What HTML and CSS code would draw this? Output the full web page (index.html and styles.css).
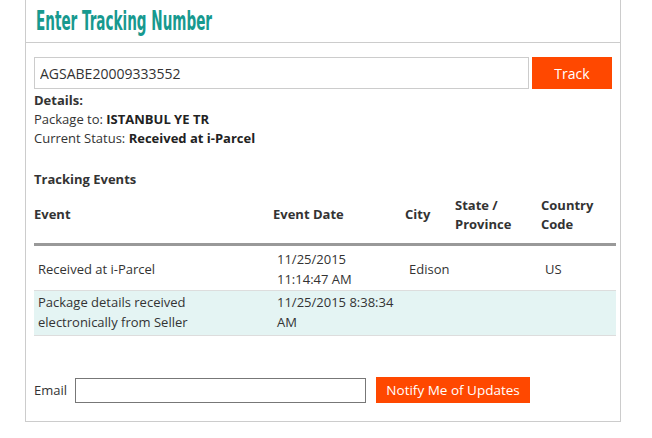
FILE: index.html
```html
<!DOCTYPE html>
<html lang="en">
<head>
    <meta charset="UTF-8">
    <meta name="viewport" content="width=device-width, initial-scale=1.0">
    <title>Enter Tracking Number</title>
    <link rel="stylesheet" href="styles.css">
</head>
<body>

    <div class="tracking-box">
        <div class="tracking-header">
            <h1><span>Enter Tracking Number</span></h1>
        </div>

        <div class="tracking-body">
            <form class="track-form">
                <input type="text" class="track-input" value="AGSABE20009333552">
                <button type="button" class="btn-orange btn-track">Track</button>
            </form>

            <div class="details">
                <div class="details-title">Details:</div>
                <div>Package to: <b>ISTANBUL YE TR</b></div>
                <div>Current Status: <b>Received at i-Parcel</b></div>
            </div>

            <h3 class="events-title">Tracking Events</h3>

            <table class="events-table">
                <colgroup>
                    <col style="width: 239px">
                    <col style="width: 132px">
                    <col style="width: 50px">
                    <col style="width: 86px">
                    <col>
                </colgroup>
                <thead>
                    <tr>
                        <th>Event</th>
                        <th>Event Date</th>
                        <th>City</th>
                        <th>State / Province</th>
                        <th>Country Code</th>
                    </tr>
                </thead>
                <tbody>
                    <tr>
                        <td>Received at i-Parcel</td>
                        <td>11/25/2015 11:14:47 AM</td>
                        <td>Edison</td>
                        <td></td>
                        <td>US</td>
                    </tr>
                    <tr class="alt">
                        <td>Package details received electronically from Seller</td>
                        <td>11/25/2015 8:38:34 AM</td>
                        <td></td>
                        <td></td>
                        <td></td>
                    </tr>
                </tbody>
            </table>

            <form class="notify-form">
                <label for="email">Email</label>
                <input type="text" id="email" class="email-input">
                <button type="button" class="btn-orange btn-notify">Notify Me of Updates</button>
            </form>
        </div>
    </div>

</body>
</html>
```

FILE: styles.css
```css
body {
    font-family: 'Open Sans', sans-serif;
    font-size: 13px;
    color: #333;
    background-color: #fff;
    margin: 0;
    padding: 0;
}

.tracking-box {
    width: 594px;
    margin-left: 25px;
    border: 1px solid #ccc;
    border-top: none;
}

.tracking-header {
    height: 42px;
    border-bottom: 1px solid #ccc;
    padding-left: 10px;
}

.tracking-header h1 {
    margin: 0;
    padding-top: 2px;
    font-family: 'DejaVu Sans Condensed', 'DejaVu Sans', sans-serif;
    font-stretch: condensed;
    font-size: 26px;
    font-weight: bold;
    line-height: 38px;
    color: #17998f;
}

.tracking-header h1 span {
    display: inline-block;
    transform: scaleX(0.58);
    transform-origin: left center;
    white-space: nowrap;
}

.tracking-body {
    padding: 14px 4px 18px 8px;
}

.track-form {
    display: flex;
    gap: 3px;
    margin: 0;
}

.track-input {
    width: 495px;
    height: 32px;
    box-sizing: border-box;
    border: 1px solid #ccc;
    padding: 0 5px;
    font-family: 'Open Sans', sans-serif;
    font-size: 14px;
    color: #333;
}

.btn-orange {
    background-color: #ff4800;
    color: #fff;
    border: none;
    border-radius: 0;
    font-family: 'Open Sans', sans-serif;
    cursor: pointer;
}

.btn-track {
    width: 80px;
    height: 32px;
    font-size: 14px;
}

.details {
    line-height: 19px;
    margin-top: 2px;
}

.details-title {
    font-weight: bold;
}

.details b {
    color: #222;
}

.events-title {
    font-size: 13px;
    font-weight: bold;
    margin: 22px 0 0;
    line-height: 19px;
}

.events-table {
    width: 582px;
    table-layout: fixed;
    border-collapse: collapse;
    margin-top: 6px;
}

.events-table th {
    text-align: left;
    font-weight: bold;
    line-height: 19px;
    padding: 0 4px 9px 0;
    height: 39px;
    border-bottom: 3px solid #999;
    vertical-align: middle;
}

.events-table td {
    line-height: 20px;
    padding: 1px 8px 1px 4px;
    height: 41px;
    border-bottom: 1px solid #ddd;
    vertical-align: middle;
}

.events-table td:first-child {
    padding-right: 12px;
}

.events-table tr:first-child td {
    padding-top: 2px;
}

.events-table tr.alt td {
    height: 42px;
    background-color: #e4f4f3;
    vertical-align: top;
}

.notify-form {
    display: flex;
    align-items: center;
    margin: 41px 0 0;
}

.notify-form label {
    margin-right: 8px;
}

.email-input {
    width: 291px;
    height: 25px;
    box-sizing: border-box;
    border: 1px solid #777;
    margin-right: 10px;
}

.btn-notify {
    width: 154px;
    height: 26px;
    font-size: 13.5px;
    padding: 0;
}
```
